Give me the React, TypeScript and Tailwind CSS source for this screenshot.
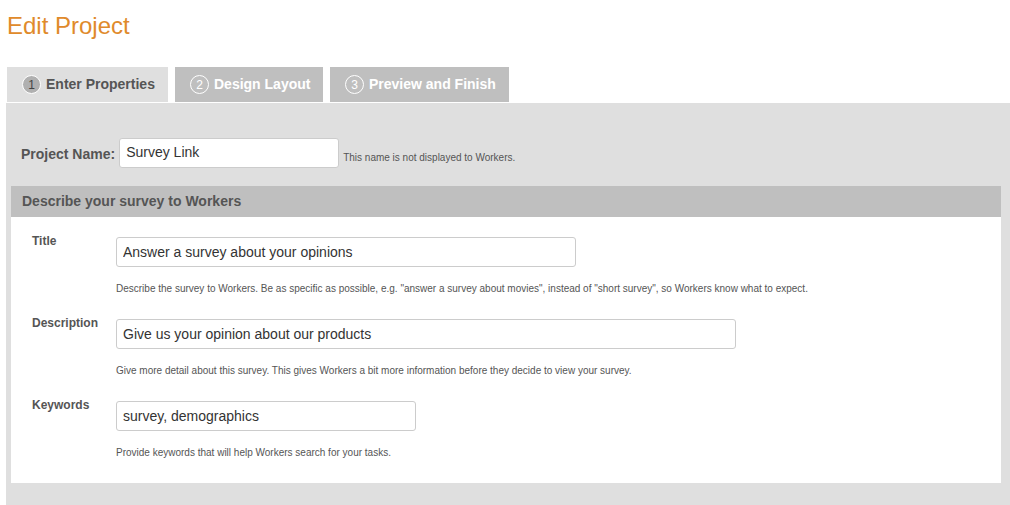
import React from "react";

const tabs = [
  { n: 1, label: "Enter Properties", active: true, w: "w-[161px]" },
  { n: 2, label: "Design Layout", active: false, w: "w-[148px]" },
  { n: 3, label: "Preview and Finish", active: false, w: "w-[179px]" },
];

function Field({
  label,
  value,
  width,
  help,
}: {
  label: string;
  value: string;
  width: string;
  help: string;
}) {
  return (
    <div className="flex">
      <div className="-mt-[3px] w-[105px] shrink-0 pl-[21px] text-[12px] font-bold leading-[14px] text-[#555]">{label}</div>
      <div className="flex flex-col">
        <input
          readOnly
          value={value}
          className={`${width} h-[30px] rounded-[3px] border border-[#ccc] bg-white px-[6px] text-[14px] text-[#333] outline-none`}
        />
        <div className="mt-[15px] h-[14px] text-[10px] leading-[14px] text-[#555]">{help}</div>
      </div>
    </div>
  );
}

export default function App() {
  return (
    <div className="min-h-[505px] bg-white font-['Liberation_Sans',Arial,sans-serif]">
      <h1 className="pl-[7px] pt-[12px] text-[24px] leading-[28px] text-[#e08a2b]">Edit Project</h1>

      <div className="mt-[27px] flex gap-[7px] pl-[7px]">
        {tabs.map((t) => (
          <div
            key={t.n}
            className={`${t.w} flex h-[35px] items-center gap-[5px] pl-[15px] text-[14px] font-bold ${
              t.active ? "bg-[#dfdfdf] text-[#555]" : "bg-[#bfbfbf] text-white"
            }`}
          >
            <span
              className={`flex h-[19px] w-[19px] items-center justify-center rounded-full border-[1.5px] border-white text-[12px] font-normal ${
                t.active ? "bg-[#b0b0b0] text-[#444]" : "text-white"
              }`}
            >
              {t.n}
            </span>
            {t.label}
          </div>
        ))}
      </div>

      <div className="ml-[6px] mt-[1px] bg-[#dfdfdf] pb-[30px] pt-[35px]">
        <div className="flex items-end pl-[15px]">
          <span className="mb-[3px] text-[14px] font-bold text-[#555]">Project Name:</span>
          <input
            readOnly
            value="Survey Link"
            className="ml-[4px] h-[30px] w-[220px] rounded-[3px] border border-[#ccc] bg-white px-[6px] pb-[2px] text-[14px] text-[#333] outline-none"
          />
          <span className="mb-[3px] ml-[4px] text-[10px] text-[#555]">This name is not displayed to Workers.</span>
        </div>

        <div className="ml-[5px] mr-[9px] mt-[18px]">
          <div className="flex h-[31px] items-center bg-[#bfbfbf] pl-[11px] text-[14px] font-bold text-[#555]">
            Describe your survey to Workers
          </div>
          <div className="flex flex-col gap-[23px] bg-white pb-[23px] pt-[20px]">
            <Field
              label="Title"
              value="Answer a survey about your opinions"
              width="w-[460px]"
              help={'Describe the survey to Workers. Be as specific as possible, e.g. "answer a survey about movies", instead of "short survey", so Workers know what to expect.'}
            />
            <Field
              label="Description"
              value="Give us your opinion about our products"
              width="w-[620px]"
              help="Give more detail about this survey. This gives Workers a bit more information before they decide to view your survey."
            />
            <Field
              label="Keywords"
              value="survey, demographics"
              width="w-[300px]"
              help="Provide keywords that will help Workers search for your tasks."
            />
          </div>
        </div>
      </div>
    </div>
  );
}
